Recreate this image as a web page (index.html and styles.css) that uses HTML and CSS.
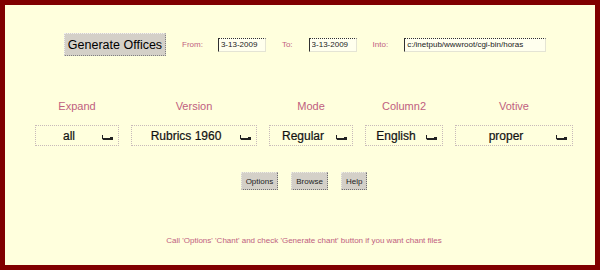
FILE: index.html
```html
<html lang="en">
<head>
  <meta charset="UTF-8">
  <title>Divinum Officium - Generate Offices</title>
  <link rel="stylesheet" href="styles.css">
</head>
<body>
  <div class="frame">

    <div class="genRow">
      <button type="button" class="bigButton">Generate Offices</button>
      <span class="smallLabel">From:</span>
      <input type="text" class="field dateField" value="3-13-2009">
      <span class="smallLabel">To:</span>
      <input type="text" class="field dateField" value="3-13-2009">
      <span class="smallLabel">Into:</span>
      <input type="text" class="field pathField" value="c:/inetpub/wwwroot/cgi-bin/horas">
    </div>

    <div class="choiceRow">
      <div class="choice">
        <span class="choiceLabel">Expand</span>
        <div class="selectBox w-expand"><span class="selectText">all</span><svg class="arrow" width="11" height="6" viewBox="0 0 11 6"><path d="M0.5 1V5H11" fill="none" stroke="#222" stroke-width="1"/><rect x="1" y="4" width="10" height="2" fill="#222"/><rect x="8" y="3" width="3" height="3" fill="#222"/></svg></div>
      </div>
      <div class="choice">
        <span class="choiceLabel">Version</span>
        <div class="selectBox w-version"><span class="selectText">Rubrics 1960</span><svg class="arrow" width="11" height="6" viewBox="0 0 11 6"><path d="M0.5 1V5H11" fill="none" stroke="#222" stroke-width="1"/><rect x="1" y="4" width="10" height="2" fill="#222"/><rect x="8" y="3" width="3" height="3" fill="#222"/></svg></div>
      </div>
      <div class="choice">
        <span class="choiceLabel">Mode</span>
        <div class="selectBox w-mode"><span class="selectText">Regular</span><svg class="arrow" width="11" height="6" viewBox="0 0 11 6"><path d="M0.5 1V5H11" fill="none" stroke="#222" stroke-width="1"/><rect x="1" y="4" width="10" height="2" fill="#222"/><rect x="8" y="3" width="3" height="3" fill="#222"/></svg></div>
      </div>
      <div class="choice">
        <span class="choiceLabel">Column2</span>
        <div class="selectBox w-column"><span class="selectText">English</span><svg class="arrow" width="11" height="6" viewBox="0 0 11 6"><path d="M0.5 1V5H11" fill="none" stroke="#222" stroke-width="1"/><rect x="1" y="4" width="10" height="2" fill="#222"/><rect x="8" y="3" width="3" height="3" fill="#222"/></svg></div>
      </div>
      <div class="choice">
        <span class="choiceLabel">Votive</span>
        <div class="selectBox w-votive"><span class="selectText">proper</span><svg class="arrow" width="11" height="6" viewBox="0 0 11 6"><path d="M0.5 1V5H11" fill="none" stroke="#222" stroke-width="1"/><rect x="1" y="4" width="10" height="2" fill="#222"/><rect x="8" y="3" width="3" height="3" fill="#222"/></svg></div>
      </div>
    </div>

    <div class="buttonRow">
      <button type="button" class="smallButton">Options</button>
      <button type="button" class="smallButton">Browse</button>
      <button type="button" class="smallButton">Help</button>
    </div>

    <p class="note">Call 'Options' 'Chant' and check 'Generate chant' button if you want chant files</p>

  </div>
</body>
</html>
```

FILE: styles.css
```css
body, html {
  margin: 0;
  padding: 0;
}
body {
  font-family: "Liberation Sans", Arial, sans-serif;
  background-color: #ffffdd;
}
.frame {
  box-sizing: border-box;
  width: 600px;
  height: 270px;
  border: 5px solid #800000;
  background-color: #ffffdd;
  display: flex;
  flex-direction: column;
}
.genRow {
  display: flex;
  align-items: center;
  gap: 16px;
  padding-left: 59px;
  margin-top: 28px;
  height: 23px;
}
.bigButton {
  box-sizing: border-box;
  width: 102px;
  height: 23px;
  padding: 0;
  font-family: "Liberation Sans", Arial, sans-serif;
  font-size: 12.5px;
  color: #000;
  background-color: #d4d0c8;
  border: 1px dotted #808080;
  border-top-color: #f0f0f0;
  border-left-color: #f0f0f0;
  outline: none;
}
.smallLabel {
  font-size: 8px;
  color: #c0607f;
}
.field {
  box-sizing: border-box;
  height: 14px;
  padding: 0 2px;
  font-family: "Liberation Sans", Arial, sans-serif;
  font-size: 8px;
  color: #222;
  background-color: #ffffee;
  border: 1px solid #e4e4d4;
  border-top: 1px dotted #303030;
  border-left-color: #303030;
  outline: none;
}
.dateField {
  width: 48px;
}
.pathField {
  width: 142px;
}
.genRow .smallLabel:nth-of-type(1) {
  margin-right: -1px;
}
.choiceRow {
  display: flex;
  gap: 12px;
  padding-left: 30px;
  margin-top: 44px;
}
.choice {
  display: flex;
  flex-direction: column;
  align-items: center;
  gap: 12px;
}
.choiceLabel {
  font-size: 11px;
  line-height: 13px;
  color: #c0607f;
}
.selectBox {
  box-sizing: border-box;
  height: 21px;
  display: flex;
  align-items: center;
  padding-right: 5px;
  border: 1px dotted #c8baba;
}
.selectText {
  flex: 1;
  text-align: center;
  font-size: 12px;
  color: #111;
  -webkit-text-stroke: 0.2px #111;
}
.arrow {
  display: block;
  margin-top: 2px;
}
.w-expand { width: 84px; }
.w-version { width: 126px; }
.w-mode { width: 84px; }
.w-column { width: 78px; }
.w-votive { width: 118px; }
.buttonRow {
  display: flex;
  justify-content: center;
  gap: 13px;
  padding-left: 8px;
  margin-top: 26px;
}
.smallButton {
  box-sizing: border-box;
  height: 18px;
  padding: 0 4px;
  font-family: "Liberation Sans", Arial, sans-serif;
  font-size: 8px;
  color: #222;
  background-color: #d4d0c8;
  border: 1px dotted #707070;
  border-top-color: #ecece4;
  border-left-color: #ecece4;
  outline: none;
}
p {
  margin: 0;
}
.note {
  margin-top: 46px;
  padding-left: 8px;
  text-align: center;
  font-size: 8px;
  line-height: 10px;
  color: #c0607f;
}
```
